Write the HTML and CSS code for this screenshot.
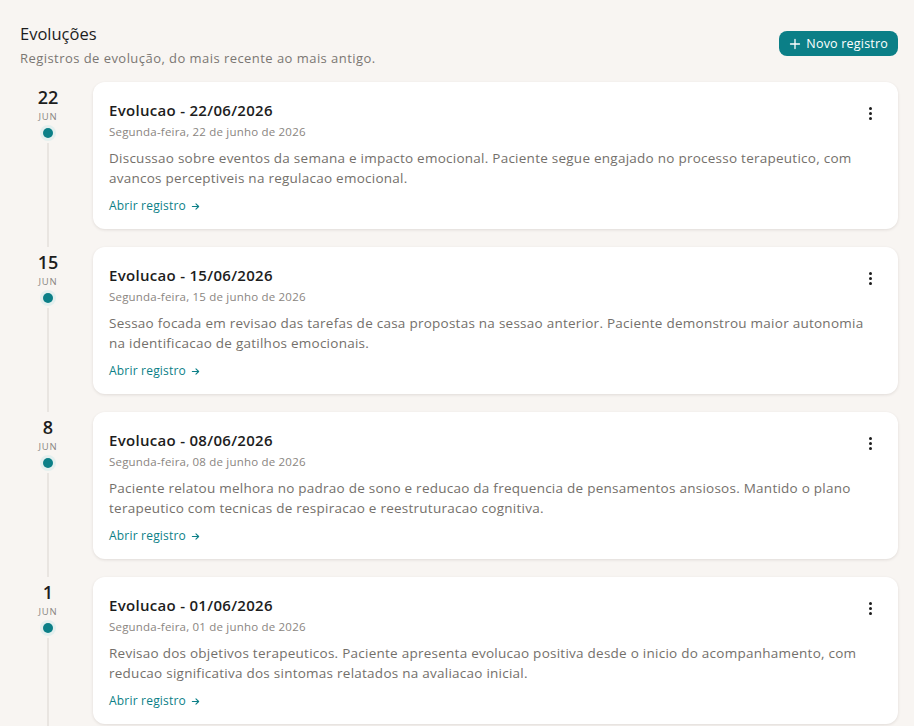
FILE: index.html
```html
<!DOCTYPE html>
<html lang="pt-BR">
<head>
    <meta charset="UTF-8">
    <meta name="viewport" content="width=device-width, initial-scale=1.0">
    <title>Evoluções</title>
    <link rel="stylesheet" href="styles.css">
</head>
<body>
    <main class="page">
        <header class="page-header">
            <div class="page-heading">
                <h1 class="page-title">Evoluções</h1>
                <p class="page-subtitle">Registros de evolução, do mais recente ao mais antigo.</p>
            </div>
            <button class="btn-new" type="button">
                <svg width="12" height="12" viewBox="0 0 12 12" fill="none" stroke="currentColor" stroke-width="1.3" stroke-linecap="round"><path d="M6 1.5v9M1.5 6h9"/></svg>
                Novo registro
            </button>
        </header>

        <section class="timeline">
            <article class="entry">
                <div class="entry-date">
                    <span class="day">22</span>
                    <span class="month">JUN</span>
                    <span class="dot"></span>
                    <span class="line"></span>
                </div>
                <div class="card">
                    <div class="card-head">
                        <h2 class="card-title">Evolucao - 22/06/2026</h2>
                        <button class="kebab" type="button" aria-label="Mais opções"><span></span><span></span><span></span></button>
                    </div>
                    <p class="card-date">Segunda-feira, 22 de junho de 2026</p>
                    <p class="card-text">Discussao sobre eventos da semana e impacto emocional. Paciente segue engajado no processo terapeutico, com avancos perceptiveis na regulacao emocional.</p>
                    <a href="#" class="card-link">Abrir registro
                        <svg width="9" height="9" viewBox="0 0 10 10" fill="none" stroke="currentColor" stroke-width="1.2" stroke-linecap="round" stroke-linejoin="round"><path d="M1.5 5h7M5.5 2l3 3-3 3"/></svg>
                    </a>
                </div>
            </article>

            <article class="entry">
                <div class="entry-date">
                    <span class="day">15</span>
                    <span class="month">JUN</span>
                    <span class="dot"></span>
                    <span class="line"></span>
                </div>
                <div class="card">
                    <div class="card-head">
                        <h2 class="card-title">Evolucao - 15/06/2026</h2>
                        <button class="kebab" type="button" aria-label="Mais opções"><span></span><span></span><span></span></button>
                    </div>
                    <p class="card-date">Segunda-feira, 15 de junho de 2026</p>
                    <p class="card-text">Sessao focada em revisao das tarefas de casa propostas na sessao anterior. Paciente demonstrou maior autonomia na identificacao de gatilhos emocionais.</p>
                    <a href="#" class="card-link">Abrir registro
                        <svg width="9" height="9" viewBox="0 0 10 10" fill="none" stroke="currentColor" stroke-width="1.2" stroke-linecap="round" stroke-linejoin="round"><path d="M1.5 5h7M5.5 2l3 3-3 3"/></svg>
                    </a>
                </div>
            </article>

            <article class="entry">
                <div class="entry-date">
                    <span class="day">8</span>
                    <span class="month">JUN</span>
                    <span class="dot"></span>
                    <span class="line"></span>
                </div>
                <div class="card">
                    <div class="card-head">
                        <h2 class="card-title">Evolucao - 08/06/2026</h2>
                        <button class="kebab" type="button" aria-label="Mais opções"><span></span><span></span><span></span></button>
                    </div>
                    <p class="card-date">Segunda-feira, 08 de junho de 2026</p>
                    <p class="card-text">Paciente relatou melhora no padrao de sono e reducao da frequencia de pensamentos ansiosos. Mantido o plano terapeutico com tecnicas de respiracao e reestruturacao cognitiva.</p>
                    <a href="#" class="card-link">Abrir registro
                        <svg width="9" height="9" viewBox="0 0 10 10" fill="none" stroke="currentColor" stroke-width="1.2" stroke-linecap="round" stroke-linejoin="round"><path d="M1.5 5h7M5.5 2l3 3-3 3"/></svg>
                    </a>
                </div>
            </article>

            <article class="entry">
                <div class="entry-date">
                    <span class="day">1</span>
                    <span class="month">JUN</span>
                    <span class="dot"></span>
                    <span class="line"></span>
                </div>
                <div class="card">
                    <div class="card-head">
                        <h2 class="card-title">Evolucao - 01/06/2026</h2>
                        <button class="kebab" type="button" aria-label="Mais opções"><span></span><span></span><span></span></button>
                    </div>
                    <p class="card-date">Segunda-feira, 01 de junho de 2026</p>
                    <p class="card-text">Revisao dos objetivos terapeuticos. Paciente apresenta evolucao positiva desde o inicio do acompanhamento, com reducao significativa dos sintomas relatados na avaliacao inicial.</p>
                    <a href="#" class="card-link">Abrir registro
                        <svg width="9" height="9" viewBox="0 0 10 10" fill="none" stroke="currentColor" stroke-width="1.2" stroke-linecap="round" stroke-linejoin="round"><path d="M1.5 5h7M5.5 2l3 3-3 3"/></svg>
                    </a>
                </div>
            </article>
        </section>
    </main>
</body>
</html>
```

FILE: styles.css
```css
* {
    margin: 0;
    padding: 0;
    box-sizing: border-box;
}

body {
    font-family: 'Open Sans', 'Noto Sans', sans-serif;
    background: #f8f5f2;
    color: #1d1d1d;
}

.page {
    padding: 23px 16px 0 20px;
}

.page-header {
    display: flex;
    justify-content: space-between;
    align-items: center;
    margin-bottom: 15px;
}

.page-title {
    font-size: 16.5px;
    font-weight: 400;
    line-height: 22px;
    color: #1d1d1d;
}

.page-subtitle {
    margin-top: 4px;
    font-size: 13px;
    letter-spacing: 0.45px;
    line-height: 18px;
    color: #7b7773;
}

.btn-new {
    display: flex;
    align-items: center;
    gap: 5px;
    height: 25px;
    padding: 0 10px;
    border: none;
    border-radius: 8px;
    background: #0b7f87;
    color: #ffffff;
    font-family: inherit;
    font-size: 12.5px;
    letter-spacing: 0.2px;
    cursor: pointer;
    margin-top: -3px;
}

.entry {
    display: flex;
    gap: 17px;
}

.entry-date {
    width: 56px;
    flex-shrink: 0;
    display: flex;
    flex-direction: column;
    align-items: center;
}

.day {
    margin-top: 3px;
    font-size: 18px;
    font-weight: 600;
    line-height: 24px;
    color: #1d1d1d;
}

.month {
    margin-top: 1px;
    font-size: 9.5px;
    letter-spacing: 0.8px;
    line-height: 14px;
    color: #8a8581;
}

.dot {
    width: 10px;
    height: 10px;
    margin-top: 4px;
    border-radius: 50%;
    background: #0b7f87;
    box-shadow: 0 0 0 3px #e3efee;
}

.line {
    flex: 1;
    width: 2px;
    margin-top: 5px;
    background: #e9e5e1;
}

.card {
    flex: 1;
    margin-bottom: 18px;
    padding: 18px 16px 14px 16px;
    background: #ffffff;
    border-radius: 12px;
    box-shadow: 0 1px 3px rgba(60, 45, 30, 0.12);
}

.card-head {
    display: flex;
    justify-content: space-between;
    align-items: center;
    height: 20px;
}

.card-title {
    font-size: 15px;
    font-weight: 600;
    letter-spacing: 0.3px;
    line-height: 20px;
    color: #1d1d1d;
}

.kebab {
    display: flex;
    flex-direction: column;
    align-items: center;
    justify-content: center;
    gap: 2px;
    width: 24px;
    height: 24px;
    margin-top: 6px;
    border: none;
    background: transparent;
    cursor: pointer;
}

.kebab span {
    width: 3px;
    height: 3px;
    border-radius: 50%;
    background: #1d1d1d;
}

.card-date {
    margin-top: 5px;
    font-size: 11.5px;
    letter-spacing: 0.2px;
    line-height: 14px;
    color: #8a8581;
}

.card-text {
    margin-top: 9px;
    font-size: 13.5px;
    letter-spacing: 0.25px;
    line-height: 20px;
    color: #74706b;
}

.card-link {
    display: inline-flex;
    align-items: center;
    gap: 5px;
    margin-top: 10px;
    font-size: 12px;
    letter-spacing: 0.2px;
    line-height: 16px;
    color: #0b7f87;
    text-decoration: none;
}
```
